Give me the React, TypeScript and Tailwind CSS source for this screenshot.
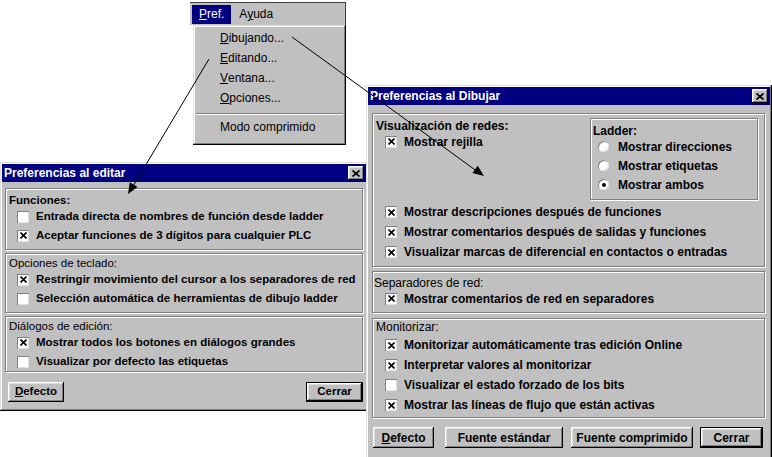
import type { ReactNode } from "react";

const frame =
  "shadow-[inset_-1px_-1px_0_#000,inset_1px_1px_0_#dfdfdf,inset_-2px_-2px_0_#808080,inset_2px_2px_0_#fff]";
const raised =
  "shadow-[inset_-1px_-1px_0_#000,inset_1px_1px_0_#fff,inset_-2px_-2px_0_#808080,inset_2px_2px_0_#dfdfdf]";
const etched = "border border-[#808080] shadow-[inset_1px_1px_0_#fff,1px_1px_0_#fff]";

function XMark() {
  return (
    <svg width="7" height="7" viewBox="0 0 7 7">
      <path d="M0.5 0.5L6.5 6.5M6.5 0.5L0.5 6.5" stroke="#000" strokeWidth="1.6" />
    </svg>
  );
}

function Check({ on, label, h = "h-[19px]" }: { on?: boolean; label: string; h?: string }) {
  return (
    <div className={`flex items-center gap-[7px] ${h}`}>
      <span className="flex h-[12px] w-[12px] shrink-0 items-center justify-center bg-white shadow-[inset_1px_1px_0_#808080,inset_-1px_-1px_0_#dfdfdf]">
        {on && <XMark />}
      </span>
      <span className="whitespace-nowrap">{label}</span>
    </div>
  );
}

function Radio({ on, label }: { on?: boolean; label: string }) {
  return (
    <div className="flex h-[19px] items-center gap-[9px]">
      <span className="flex h-[11px] w-[11px] items-center justify-center rounded-full bg-white shadow-[inset_1px_1px_0_#808080,inset_-1px_-1px_0_#dfdfdf]">
        {on && <span className="h-[4px] w-[4px] rounded-full bg-black" />}
      </span>
      <span className="whitespace-nowrap">{label}</span>
    </div>
  );
}

function Btn({ children, w, def }: { children: ReactNode; w: string; def?: boolean }) {
  return (
    <button
      type="button"
      className={`flex items-center justify-center bg-[#c0c0c0] ${w} ${raised} ${def ? "border border-black" : ""}`}
    >
      {children}
    </button>
  );
}

function TitleBar({ title }: { title: string }) {
  return (
    <div className="flex h-[18px] items-center justify-between bg-[#000080] px-[2px]">
      <span className="text-[12px] font-bold text-white">{title}</span>
      <span className={`flex h-[14px] w-[16px] items-center justify-center bg-[#c0c0c0] ${raised}`}>
        <svg width="8" height="7" viewBox="0 0 8 7">
          <path d="M0.5 0.5L7.5 6.5M7.5 0.5L0.5 6.5" stroke="#000" strokeWidth="1.7" />
        </svg>
      </span>
    </div>
  );
}

function PrefMenu() {
  const items = ["Dibujando...", "Editando...", "Ventana...", "Opciones..."];
  return (
    <div className="absolute left-[190px] top-[2px] w-[156px] text-[12px] text-black">
      {/* menubar */}
      <div className="flex h-[23px] items-center gap-[8px] border-t border-r border-[#404040] bg-[#c0c0c0] pl-[2px]">
        <span className="flex h-[19px] items-center bg-[#000080] px-[7px] text-white">
          <u>P</u>ref.
        </span>
        <span>
          A<u>y</u>uda
        </span>
      </div>

      {/* dropdown */}
      <div className={`ml-[3px] h-[120px] bg-[#c0c0c0] pt-[3px] ${frame}`}>
        {items.map((item) => (
          <div key={item} className="flex h-[20px] items-center pl-[27px]">
            <u>{item[0]}</u>
            {item.slice(1)}
          </div>
        ))}
        <div className="mx-[3px] mb-[3px] mt-[5px] border-t border-b border-t-[#808080] border-b-white" />
        <div className="flex h-[18px] items-center pl-[27px]">Modo comprimido</div>
      </div>
    </div>
  );
}

function EditDialog() {
  return (
    <div className={`absolute left-0 top-[162px] flex h-[249px] w-[368px] flex-col bg-[#c0c0c0] p-[2px] ${frame}`}>
      <TitleBar title="Preferencias al editar" />
      <div className="flex flex-col px-[3px] pt-[6px] text-[11.5px] font-bold text-black">
        <div className={`h-[62px] pl-[3px] pt-[3px] ${etched}`}>
          <div className="h-[15px]">Funciones:</div>
          <div className="pl-[8px]">
            <Check label="Entrada directa de nombres de función desde ladder" />
            <Check on label="Aceptar funciones de 3 dígitos para cualquier PLC" />
          </div>
        </div>

        <div className={`mt-[3px] h-[60px] pl-[3px] pt-[1px] ${etched}`}>
          <div className="h-[15px] font-normal">Opciones de teclado:</div>
          <div className="pl-[8px]">
            <Check on label="Restringir movimiento del cursor a los separadores de red" />
            <Check label="Selección automática de herramientas de dibujo ladder" />
          </div>
        </div>

        <div className={`mt-[3px] h-[56px] pl-[3px] pt-[1px] ${etched}`}>
          <div className="h-[15px] font-normal">Diálogos de edición:</div>
          <div className="pl-[8px]">
            <Check on label="Mostrar todos los botones en diálogos grandes" />
            <Check label="Visualizar por defecto las etiquetas" />
          </div>
        </div>

        <div className="mt-[10px] flex h-[20px] justify-between pl-[3px]">
          <Btn w="w-[56px]">
            <u>D</u>efecto
          </Btn>
          <Btn w="w-[57px]" def>
            Cerrar
          </Btn>
        </div>
      </div>
    </div>
  );
}

function DrawDialog() {
  return (
    <div className={`absolute left-[366px] top-[85px] flex h-[380px] w-[406px] flex-col bg-[#c0c0c0] p-[2px] ${frame}`}>
      <TitleBar title="Preferencias al Dibujar" />
      <div className="flex flex-col pl-[4px] pr-[5px] pt-[8px] text-[12px] font-bold text-black">
        {/* Visualización de redes */}
        <div className={`h-[154px] ${etched}`}>
          <div className="flex">
            <div className="flex-1 pl-[3px] pt-[3px]">
              <div className="h-[15px]">Visualización de redes:</div>
              <div className="pl-[9px]">
                <Check on label="Mostrar rejilla" />
              </div>
            </div>
            <div className={`mr-[6px] mt-[4px] h-[82px] w-[168px] pl-[2px] pt-[3px] ${etched}`}>
              <div className="h-[15px]">Ladder:</div>
              <div className="pl-[5px]">
                <Radio label="Mostrar direcciones" />
                <Radio label="Mostrar etiquetas" />
                <Radio on label="Mostrar ambos" />
              </div>
            </div>
          </div>
          <div className="mt-[2px] pl-[12px]">
            <Check on h="h-[20px]" label="Mostrar descripciones después de funciones" />
            <Check on h="h-[20px]" label="Mostrar comentarios después de salidas y funciones" />
            <Check on h="h-[20px]" label="Visualizar marcas de diferencial en contactos o entradas" />
          </div>
        </div>

        {/* Separadores de red */}
        <div className={`mt-[4px] h-[42px] pl-[1px] pt-[2px] ${etched}`}>
          <div className="h-[15px] font-normal">Separadores de red:</div>
          <div className="pl-[11px]">
            <Check on label="Mostrar comentarios de red en separadores" />
          </div>
        </div>

        {/* Monitorizar */}
        <div className={`mt-[5px] h-[100px] pl-[3px] ${etched}`}>
          <div className="h-[16px] font-normal leading-[16px]">Monitorizar:</div>
          <div className="pl-[9px]">
            <Check on h="h-[20px]" label="Monitorizar automáticamente tras edición Online" />
            <Check on h="h-[20px]" label="Interpretar valores al monitorizar" />
            <Check h="h-[20px]" label="Visualizar el estado forzado de los bits" />
            <Check on h="h-[20px]" label="Mostrar las líneas de flujo que están activas" />
          </div>
        </div>

        <div className="mt-[9px] flex h-[21px] pl-[1px]">
          <Btn w="w-[61px]">
            <u>D</u>efecto
          </Btn>
          <span className="ml-[11px] flex">
            <Btn w="w-[118px]">Fuente estándar</Btn>
          </span>
          <span className="ml-[8px] flex">
            <Btn w="w-[122px]">Fuente comprimido</Btn>
          </span>
          <span className="ml-[7px] flex">
            <Btn w="w-[63px]" def>
              Cerrar
            </Btn>
          </span>
        </div>
      </div>
    </div>
  );
}

function Arrows() {
  return (
    <svg className="pointer-events-none absolute left-0 top-0" width="772" height="457" viewBox="0 0 772 457">
      <line x1="292" y1="37" x2="478" y2="172" stroke="#000" strokeWidth="1" />
      <polygon points="484,176 472.5,173.1 477.7,165.8" fill="#000" />
      <line x1="209" y1="59" x2="132" y2="188" stroke="#000" strokeWidth="1" />
      <polygon points="128,194 129.8,182.2 137.5,186.9" fill="#000" />
    </svg>
  );
}

export default function App() {
  return (
    <div className="relative h-[457px] w-[772px] overflow-hidden bg-white font-['Liberation_Sans',Arial,sans-serif]">
      <PrefMenu />
      <EditDialog />
      <DrawDialog />
      <Arrows />
    </div>
  );
}
